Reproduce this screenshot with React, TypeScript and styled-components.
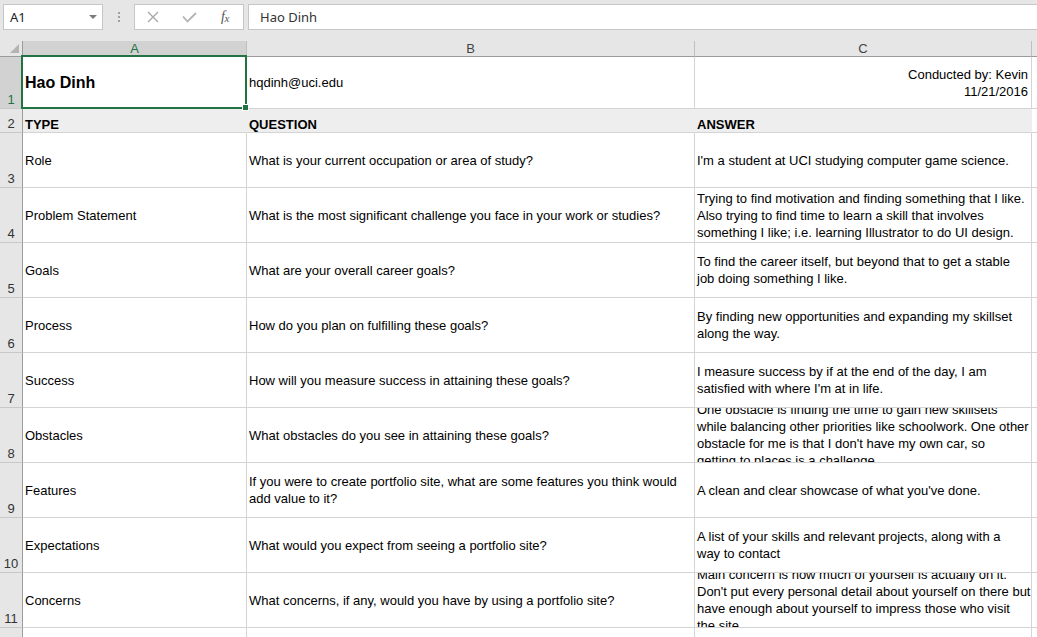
import React from "react";
import styled, { createGlobalStyle } from "styled-components";

const GlobalStyle = createGlobalStyle`
  html, body { margin: 0; padding: 0; background: #ffffff; overflow: hidden; }
  body { font-family: "Liberation Sans", Arial, sans-serif; }
`;

const Window = styled.div`
  width: 1037px;
  height: 637px;
  overflow: hidden;
  background: #ffffff;
`;

const Toolbar = styled.div`
  display: flex;
  align-items: flex-start;
  height: 41px;
  padding: 4px 0 0 3px;
  box-sizing: border-box;
  background: #e6e6e6;
`;

const NameBox = styled.div`
  width: 100px;
  height: 26px;
  box-sizing: border-box;
  border: 1px solid #c6c6c6;
  background: #ffffff;
  display: flex;
  align-items: center;
  justify-content: space-between;
  padding: 0 5px 0 6px;
  font-family: "Noto Sans", "Open Sans", sans-serif;
  font-size: 13px;
  color: #222;
`;

const DropArrow = styled.span`
  width: 0;
  height: 0;
  border-left: 4px solid transparent;
  border-right: 4px solid transparent;
  border-top: 4px solid #7a7a7a;
`;

const Separator = styled.div`
  width: 31px;
  height: 26px;
  display: flex;
  flex-direction: column;
  align-items: center;
  justify-content: center;
  gap: 2px;
`;

const Dot = styled.span`
  width: 2px;
  height: 2px;
  background: #a0a0a0;
`;

const FxGroup = styled.div`
  height: 26px;
  box-sizing: border-box;
  border: 1px solid #c6c6c6;
  background: #ffffff;
  display: flex;
  align-items: center;
`;

const FxSlot = styled.div`
  width: 36px;
  height: 24px;
  display: flex;
  align-items: center;
  justify-content: center;
`;

const FxText = styled.span`
  font-family: "Liberation Serif", "Times New Roman", serif;
  font-style: italic;
  font-size: 14px;
  color: #555;
  letter-spacing: -0.5px;
  sub {
    font-size: 11px;
    vertical-align: -1px;
  }
`;

const FormulaInput = styled.div`
  flex: 1;
  height: 26px;
  box-sizing: border-box;
  margin-left: 4px;
  margin-right: -2px;
  border: 1px solid #c6c6c6;
  background: #ffffff;
  display: flex;
  align-items: center;
  padding-left: 11px;
  font-family: "Noto Sans", "Open Sans", sans-serif;
  font-size: 13px;
  color: #333;
`;

const Sheet = styled.div`
  display: grid;
  grid-template-columns: 23px 224px 448px 337px 1fr;
  grid-template-rows: 16px 52px 24px repeat(10, 55px);
  font-family: "Liberation Sans", Arial, sans-serif;
  font-size: 13px;
  color: #000;
`;

const Corner = styled.div`
  background: #e6e6e6;
  border-right: 1px solid #9b9b9b;
  border-bottom: 1px solid #9b9b9b;
  box-sizing: border-box;
  display: flex;
  align-items: flex-end;
  justify-content: flex-end;
  padding: 0 3px 3px 0;
`;

const CornerTriangle = styled.span`
  width: 0;
  height: 0;
  border-left: 9px solid transparent;
  border-bottom: 9px solid #b4b4b4;
`;

const ColHeader = styled.div<{ $selected?: boolean }>`
  box-sizing: border-box;
  background: ${(p) => (p.$selected ? "#d2d2d2" : "#e6e6e6")};
  color: ${(p) => (p.$selected ? "#217346" : "#444")};
  border-right: 1px solid #bfbfbf;
  border-bottom: 1px solid #9b9b9b;
  display: flex;
  align-items: center;
  justify-content: center;
  font-size: 13px;
  line-height: 15px;
`;

const RowHeader = styled.div<{ $selected?: boolean }>`
  box-sizing: border-box;
  background: ${(p) => (p.$selected ? "#d2d2d2" : "#e6e6e6")};
  color: ${(p) => (p.$selected ? "#217346" : "#333")};
  border-right: 1px solid #9b9b9b;
  border-bottom: 1px solid #c8c8c8;
  display: flex;
  align-items: flex-end;
  justify-content: center;
  padding-bottom: 2px;
  font-size: 13px;
  line-height: 13px;
`;

const Cell = styled.div<{
  $fill?: boolean;
  $right?: boolean;
  $bottom?: boolean;
  $bold?: boolean;
  $big?: boolean;
  $selected?: boolean;
}>`
  position: relative;
  box-sizing: border-box;
  min-width: 0;
  background: ${(p) => (p.$fill ? "#eeeeee" : "#ffffff")};
  border-right: 1px solid ${(p) => (p.$fill ? "#eeeeee" : "#d4d4d4")};
  border-bottom: 1px solid #d4d4d4;
  display: flex;
  flex-direction: column;
  justify-content: ${(p) => (p.$bottom ? "flex-end" : "center")};
  align-items: ${(p) => (p.$right ? "flex-end" : "flex-start")};
  padding: ${(p) => (p.$bottom ? "0 3px 1px 2px" : "0 3px 0 2px")};
  overflow: ${(p) => (p.$selected ? "visible" : "hidden")};
  white-space: nowrap;
  font-weight: ${(p) => (p.$bold ? 700 : 400)};
  font-size: ${(p) => (p.$big ? "16px" : "13px")};
  line-height: ${(p) => (p.$bottom ? "13px" : "17px")};
  text-align: ${(p) => (p.$right ? "right" : "left")};
`;

const Line = styled.span`
  display: block;
  flex-shrink: 0;
`;

const Selection = styled.span`
  position: absolute;
  top: -2px;
  left: -2px;
  right: -1px;
  bottom: -1px;
  border: 2px solid #217346;
  pointer-events: none;
  z-index: 2;
`;

const Handle = styled.span`
  position: absolute;
  right: -4px;
  bottom: -4px;
  width: 5px;
  height: 5px;
  background: #217346;
  border: 1px solid #ffffff;
`;

const CloseIcon = () => (
  <svg width="12" height="12" viewBox="0 0 12 12">
    <path d="M1 1 L11 11 M11 1 L1 11" stroke="#a8a8a8" strokeWidth="1.4" fill="none" />
  </svg>
);

const CheckIcon = () => (
  <svg width="15" height="11" viewBox="0 0 15 11">
    <path d="M1 4.5 L5.5 9.5 L14 1" stroke="#b4b4b4" strokeWidth="1.8" fill="none" />
  </svg>
);

type Row = { n: number; a: string; b: string[]; c: string[] };

const rows: Row[] = [
  {
    n: 3,
    a: "Role",
    b: ["What is your current occupation or area of study?"],
    c: ["I'm a student at UCI studying computer game science."],
  },
  {
    n: 4,
    a: "Problem Statement",
    b: ["What is the most significant challenge you face in your work or studies?"],
    c: [
      "Trying to find motivation and finding something that I like.",
      "Also trying to find time to learn a skill that involves",
      "something I like; i.e. learning Illustrator to do UI design.",
    ],
  },
  {
    n: 5,
    a: "Goals",
    b: ["What are your overall career goals?"],
    c: [
      "To find the career itself, but beyond that to get a stable",
      "job doing something I like.",
    ],
  },
  {
    n: 6,
    a: "Process",
    b: ["How do you plan on fulfilling these goals?"],
    c: ["By finding new opportunities and expanding my skillset", "along the way."],
  },
  {
    n: 7,
    a: "Success",
    b: ["How will you measure success in attaining these goals?"],
    c: ["I measure success by if at the end of the day, I am", "satisfied with where I'm at in life."],
  },
  {
    n: 8,
    a: "Obstacles",
    b: ["What obstacles do you see in attaining these goals?"],
    c: [
      "One obstacle is finding the time to gain new skillsets",
      "while balancing other priorities like schoolwork. One other",
      "obstacle for me is that I don't have my own car, so",
      "getting to places is a challenge.",
    ],
  },
  {
    n: 9,
    a: "Features",
    b: [
      "If you were to create portfolio site, what are some features you think would",
      "add value to it?",
    ],
    c: ["A clean and clear showcase of what you've done."],
  },
  {
    n: 10,
    a: "Expectations",
    b: ["What would you expect from seeing a portfolio site?"],
    c: ["A list of your skills and relevant projects, along with a", "way to contact"],
  },
  {
    n: 11,
    a: "Concerns",
    b: ["What concerns, if any, would you have by using a portfolio site?"],
    c: [
      "Main concern is how much of yourself is actually on it.",
      "Don't put every personal detail about yourself on there but",
      "have enough about yourself to impress those who visit",
      "the site.",
    ],
  },
];

export default function App() {
  return (
    <Window>
      <GlobalStyle />
      <Toolbar>
        <NameBox>
          <span>A1</span>
          <DropArrow />
        </NameBox>
        <Separator>
          <Dot />
          <Dot />
          <Dot />
        </Separator>
        <FxGroup>
          <FxSlot>
            <CloseIcon />
          </FxSlot>
          <FxSlot>
            <CheckIcon />
          </FxSlot>
          <FxSlot>
            <FxText>
              f<sub>x</sub>
            </FxText>
          </FxSlot>
        </FxGroup>
        <FormulaInput>Hao Dinh</FormulaInput>
      </Toolbar>
      <Sheet>
        <Corner>
          <CornerTriangle />
        </Corner>
        <ColHeader $selected>A</ColHeader>
        <ColHeader>B</ColHeader>
        <ColHeader>C</ColHeader>
        <ColHeader />

        <RowHeader $selected>1</RowHeader>
        <Cell $bold $big $selected>
          <Line>Hao Dinh</Line>
          <Selection>
            <Handle />
          </Selection>
        </Cell>
        <Cell>
          <Line>hqdinh@uci.edu</Line>
        </Cell>
        <Cell $right>
          <Line>Conducted by: Kevin</Line>
          <Line>11/21/2016</Line>
        </Cell>
        <Cell />

        <RowHeader>2</RowHeader>
        <Cell $fill $bottom $bold>
          <Line>TYPE</Line>
        </Cell>
        <Cell $fill $bottom $bold>
          <Line>QUESTION</Line>
        </Cell>
        <Cell $fill $bottom $bold>
          <Line>ANSWER</Line>
        </Cell>
        <Cell />

        {rows.map((r) => (
          <React.Fragment key={r.n}>
            <RowHeader>{r.n}</RowHeader>
            <Cell>
              <Line>{r.a}</Line>
            </Cell>
            <Cell>
              {r.b.map((l, i) => (
                <Line key={i}>{l}</Line>
              ))}
            </Cell>
            <Cell>
              {r.c.map((l, i) => (
                <Line key={i}>{l}</Line>
              ))}
            </Cell>
            <Cell />
          </React.Fragment>
        ))}

        <RowHeader>12</RowHeader>
        <Cell />
        <Cell />
        <Cell />
        <Cell />
      </Sheet>
    </Window>
  );
}
